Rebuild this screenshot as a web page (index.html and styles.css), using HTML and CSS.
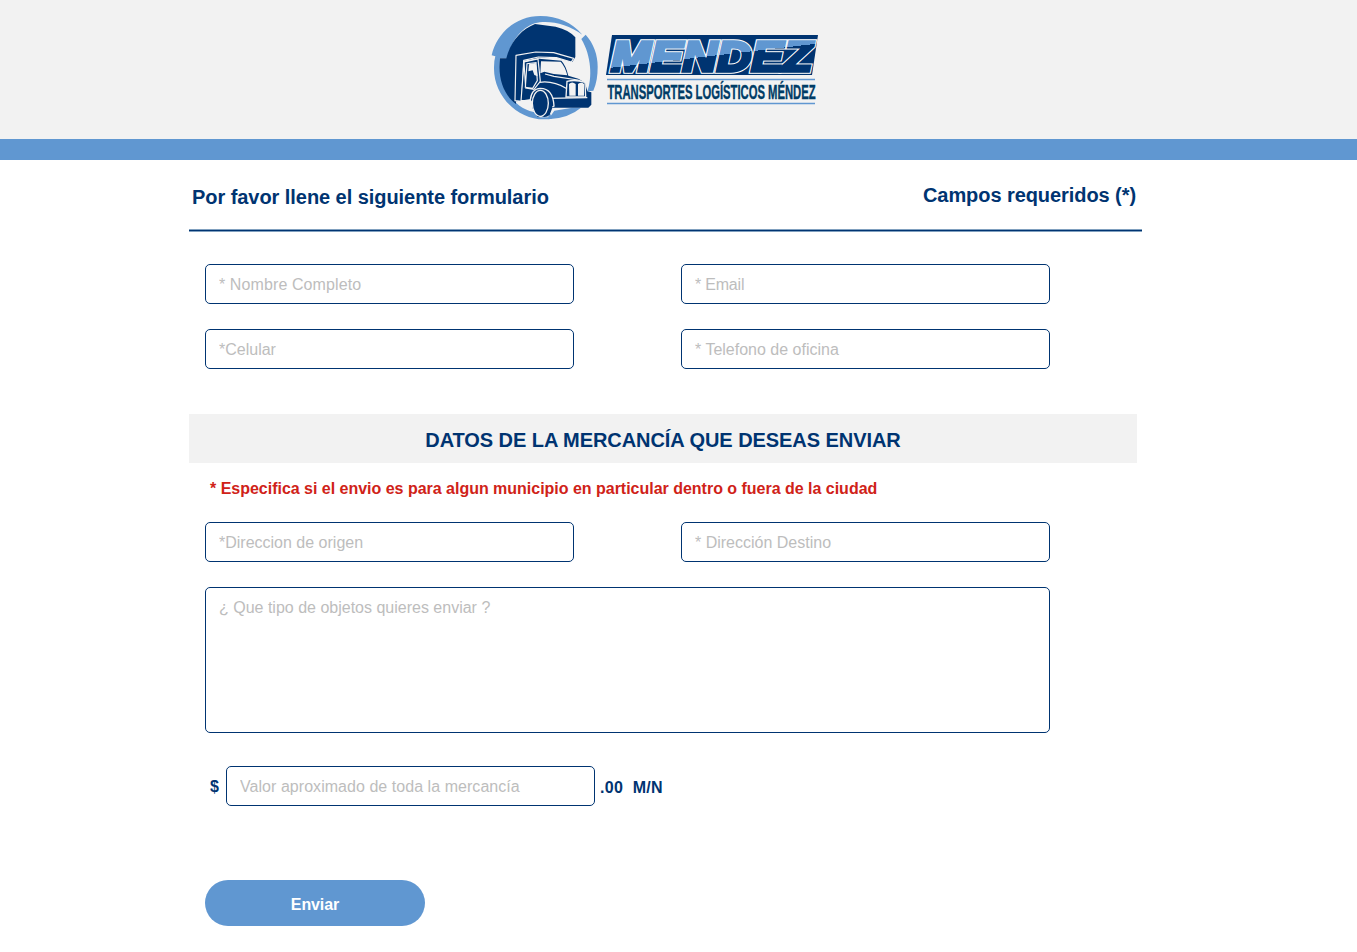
FILE: index.html
```html
<!DOCTYPE html>
<html lang="es">
<head>
<meta charset="utf-8">
<title>Transportes Logísticos Méndez</title>
<link rel="stylesheet" href="styles.css">
</head>
<body>
<header class="site-header">
<svg class="logo" viewBox="485 8 340 120" role="img" aria-label="Mendez">
  <defs>
    <linearGradient id="split" gradientUnits="userSpaceOnUse" x1="709" y1="38" x2="713.2" y2="74">
      <stop offset="0.5" stop-color="#6097d1"/><stop offset="0.5" stop-color="#003471"/>
    </linearGradient>
  </defs>
  <g transform="translate(485 8) scale(.33333)">
    <path fill="#6097d1" d="M20 142C34 78 90 24 166 24C218 24 260 43 292 80C253 52 207 39 165 43C120 48 80 91 67 151L45 151C39 230 84 300 146 312L196 318L201 332C110 348 25 270 27 178Q27 158 31 145Z"/>
    <path fill="#6097d1" d="M289 93L302 80C326 106 338 141 338 177C338 202 335 226 325 248L307 250C322 210 320 145 289 93ZM190 334L208 308L262 299L288 299Q252 330 190 334Z"/>
    <path fill="#003471" d="M45 151H64C75 105 106 65 150 48L212 56Q253 66 271 88V147L262 162L230 148L161 150L116 158L110 278L93 280V288C55 260 38 210 45 151Z"/>
    <path fill="#003471" stroke="#f2f2f2" stroke-width="3.500" stroke-linejoin="round" d="M93 142L152 132L206 134L266 151L259 162L214 149L160 147L116 157L110 280L90 278Z"/>
    <path fill="#003471" d="M118 162L162 152L229 158Q242 171 250 203L280 212L300 224L307 250L319 253V290L310 299H199L188 327H158L142 300L140 276H108Z"/>
    <path fill="none" stroke="#f2f2f2" stroke-width="3.500" d="M117 160L108 279L138 275M117 162L159 153L166 220L147 244L122 240ZM126 167L121 238L143 241L157 218L153 164ZM180 198L207 205L279 216L301 225"/>
    <path fill="#f2f2f2" d="M132 169L152 165L158 205L148 201L143 187L130 190ZM168 160L227 161Q240 175 247 202L206 198L178 191L166 196Z"/>
    <path fill="none" stroke="#f2f2f2" stroke-width="3.500" d="M164 223Q203 217 246 242M193 271L307 269"/>
    <path fill="#003471" stroke="#f2f2f2" stroke-width="4" d="M136 276Q139 242 166 241Q204 241 207 294L195 300L188 326H166Z"/>
    <path fill="#003471" d="M170 245Q196 250 195 286L203 297L194 320Q184 330 170 325Z"/>
    <ellipse cx="166" cy="286" rx="24" ry="39" fill="#003471" stroke="#f2f2f2" stroke-width="4"/>
    <path fill="#003471" stroke="#f2f2f2" stroke-width="4" d="M243 267L246 220Q271 214 300 223L302 267Z"/>
    <path fill="#f2f2f2" d="M252 228Q261 219 272 228V263H253ZM279 228Q289 221 297 228V263H279Z"/>
  </g>
  <path fill="#003471" d="M612 35H818L812 75H606Z"/>
  <text class="brand brand-inner" x="611" y="71" textLength="201" lengthAdjust="spacingAndGlyphs">MENDEZ</text>
  <text class="brand brand-face" x="611" y="71" textLength="201" lengthAdjust="spacingAndGlyphs" aria-hidden="true">MENDEZ</text>
  <path d="M607 79.5H815M607 103.500H815" stroke="#6097d1" stroke-width="1.500"/>
  <text class="tagline" x="607.500" y="99" textLength="208" lengthAdjust="spacingAndGlyphs">TRANSPORTES LOGÍSTICOS MÉNDEZ</text>
</svg>
</header>
<main class="page">
  <div class="intro">
    <h1 class="intro-title">Por favor llene el siguiente formulario</h1>
    <p class="intro-note">Campos requeridos (*)</p>
  </div>
  <form>
    <div class="grid">
      <input class="field nombre" placeholder="* Nombre Completo">
      <input class="field email" placeholder="* Email">
      <input class="field celular" placeholder="*Celular">
      <input class="field telefono" placeholder="* Telefono de oficina">
    </div>
    <h2 class="section"><span>DATOS DE LA MERCANCÍA QUE DESEAS ENVIAR</span></h2>
    <p class="warning">* Especifica si el envio es para algun municipio en particular dentro o fuera de la ciudad</p>
    <div class="grid">
      <input class="field origen" placeholder="*Direccion de origen">
      <input class="field destino" placeholder="* Dirección Destino">
      <textarea class="field objects" placeholder="¿ Que tipo de objetos quieres enviar ?"></textarea>
    </div>
    <div class="amount">
      <span class="currency">$</span>
      <input class="field valor" placeholder="Valor aproximado de toda la mercancía">
      <span class="unit">.00 &nbsp;M/N</span>
    </div>
    <button class="submit" type="button">Enviar</button>
  </form>
</main>
</body>
</html>
```
FILE: styles.css
```css
* { box-sizing: border-box; }
body { margin: 0; background: #fff; color: #003471; font-family: "Liberation Sans", Arial, sans-serif; }
.site-header { height: 160px; padding: 8px 0 0 485px; background: #f2f2f2; border-bottom: 21px solid #6097d1; }
.logo { display: block; width: 340px; height: 120px; overflow: visible; }
.brand { font-size: 43px; font-weight: bold; font-style: italic; }
.brand-inner { fill: #fff; stroke: #fff; stroke-width: 5.4px; }
.brand-face { fill: url(#split); stroke: url(#split); stroke-width: 3.4px; }
.tagline { font-size: 20px; font-weight: bold; fill: #003c66; stroke: #003c66; stroke-width: .4px; }
.page { width: 953px; margin-left: 189px; }
.intro { display: flex; justify-content: space-between; height: 72px; padding: 23px 6px 0 3px; background: linear-gradient(#80a0bf 0 1px, #003471 1px 2px, #80a0bf 2px) bottom / 100% 3px no-repeat; }
.intro-title, .intro-note { margin: 0; font-size: 20px; line-height: 28px; font-weight: bold; white-space: nowrap; }
.intro-title { letter-spacing: -.055px; }
.intro-note { margin-top: -2px; letter-spacing: -.07px; }
.grid { display: grid; grid-template-columns: 369px 369px; gap: 25px 107px; padding: 32px 0 0 16px; }
.field { width: 369px; height: 40px; padding: 2px 13px 0; border: 1px solid #003471; border-radius: 5px; background: #fff; font: 16px "Liberation Sans", Arial, sans-serif; color: #003471; outline: 0; }
.field::placeholder { color: #bdbdbd; opacity: 1; }
.nombre { letter-spacing: .1px; }
.email { letter-spacing: -.2px; }
.valor { letter-spacing: .045px; }
.objects { grid-column: 1 / 3; width: 845px; height: 146px; padding-top: 11px; resize: none; }
.section { width: 948px; height: 49px; margin: 45px 0 0; background: #f2f2f2; font-size: 20px; line-height: 52px; text-align: center; letter-spacing: -.06px; }
.warning { margin: 15px 0 0 21px; font-size: 16px; line-height: 21px; font-weight: bold; color: #d02218; white-space: nowrap; letter-spacing: -.015px; }
.warning + .grid { padding-top: 23px; }
.amount { display: flex; align-items: center; margin: 33px 0 0 20px; font-size: 16px; font-weight: bold; }
.currency { width: 16px; margin: 2px 0 0 1px; }
.unit { margin: 3px 0 0 5px; letter-spacing: .3px; }
.submit { display: block; width: 220px; height: 46px; margin: 74px 0 0 16px; padding: 3px 0 0; border: 0; border-radius: 23px; background: #6097d1; color: #fff; font: bold 16px "Liberation Sans", Arial, sans-serif; letter-spacing: -.1px; }
```
